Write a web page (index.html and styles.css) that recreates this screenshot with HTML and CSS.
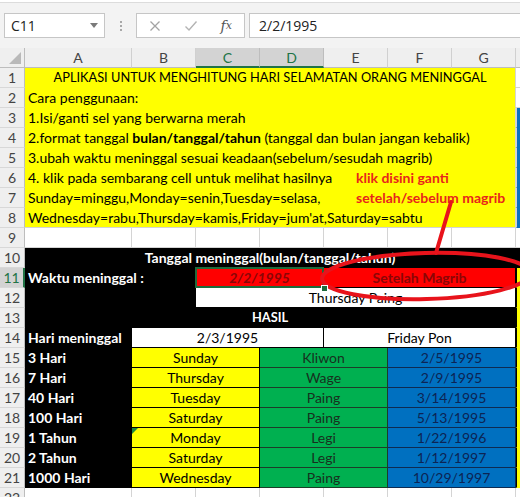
FILE: index.html
```html
<!DOCTYPE html>
<html>
<head>
<meta charset="utf-8">
<title>Hari Selamatan</title>
<link rel="stylesheet" href="styles.css">
</head>
<body>
<div class="app">
  <div class="fbar">
    <div class="namebox"><span class="nb-text">C11</span><span class="caret"></span></div>
    <div class="dots"><i></i><i></i><i></i></div>
    <div class="fbtns">
      <span class="btn"><svg width="12" height="12" viewBox="0 0 12 12"><path d="M1.5 1.5 L10.5 10.5 M10.5 1.5 L1.5 10.5" stroke="#a3a3a3" stroke-width="1.3" fill="none"/></svg></span>
      <span class="btn"><svg width="14" height="12" viewBox="0 0 14 12"><path d="M1.5 6.5 L5 10 L12.5 1.5" stroke="#b3b3b3" stroke-width="1.4" fill="none"/></svg></span>
      <span class="btn fx">f<span class="fxs">x</span></span>
    </div>
    <div class="finput">2/2/1995</div>
  </div>

  <div class="sheet">
    <div class="corner"><span class="corner-tri"></span></div>
    <div class="ch">A</div><div class="ch">B</div><div class="ch sel">C</div><div class="ch sel">D</div><div class="ch">E</div><div class="ch">F</div><div class="ch">G</div><div class="ch"></div>

    <div class="rh">1</div><div class="c y s7 ctr caps">APLIKASI UNTUK MENGHITUNG HARI SELAMATAN ORANG MENINGGAL</div><div class="c hc"></div>
    <div class="rh">2</div><div class="c y s7">Cara penggunaan:</div><div class="c hc"></div>
    <div class="rh">3</div><div class="c y s7">1.Isi/ganti sel yang berwarna merah</div><div class="c hb"></div>
    <div class="rh">4</div><div class="c y s7">2.format tanggal <b>bulan/tanggal/tahun</b> (tanggal dan bulan jangan kebalik)</div><div class="c hb"></div>
    <div class="rh">5</div><div class="c y s7">3.ubah waktu meninggal sesuai keadaan(sebelum/sesudah magrib)</div><div class="c hb"></div>
    <div class="rh">6</div><div class="c y s7 split"><span>4. klik pada sembarang cell untuk melihat hasilnya</span><span class="note">klik disini ganti</span></div><div class="c hb"></div>
    <div class="rh">7</div><div class="c y s7 split"><span>Sunday=minggu,Monday=senin,Tuesday=selasa,</span><span class="note">setelah/sebelum magrib</span></div><div class="c hb"></div>
    <div class="rh">8</div><div class="c y s7 last">Wednesday=rabu,Thursday=kamis,Friday=jum'at,Saturday=sabtu</div><div class="c hb"></div>

    <div class="rh">9</div><div class="c"></div><div class="c"></div><div class="c"></div><div class="c"></div><div class="c"></div><div class="c"></div><div class="c"></div><div class="c hc"></div>

    <div class="rh">10</div><div class="c k s7 ctr">Tanggal meninggal(bulan/tanggal/tahun)</div><div class="c hk"></div>
    <div class="rh sel">11</div><div class="c k s2">Waktu meninggal :</div><div class="c r s2 selcell"><i>2/2/1995</i><span class="handle"></span></div><div class="c r s3">Setelah Magrib</div><div class="c hy"></div>
    <div class="rh">12</div><div class="c k s2"></div><div class="c w s5">Thursday Paing</div><div class="c hy"></div>
    <div class="rh">13</div><div class="c k s7 ctr caps">HASIL</div><div class="c hy"></div>
    <div class="rh">14</div><div class="c k">Hari meninggal</div><div class="c w s3">2/3/1995</div><div class="c w s3">Friday Pon</div><div class="c hy"></div>

    <div class="rh">15</div><div class="c k">3 Hari</div><div class="c yc s2">Sunday</div><div class="c g s2">Kliwon</div><div class="c bl s2">2/5/1995</div><div class="c hy"></div>
    <div class="rh">16</div><div class="c k">7 Hari</div><div class="c yc s2">Thursday</div><div class="c g s2">Wage</div><div class="c bl s2">2/9/1995</div><div class="c hy"></div>
    <div class="rh">17</div><div class="c k">40 Hari</div><div class="c yc s2">Tuesday</div><div class="c g s2">Paing</div><div class="c bl s2">3/14/1995</div><div class="c hy"></div>
    <div class="rh">18</div><div class="c k">100 Hari</div><div class="c yc s2">Saturday</div><div class="c g s2">Paing</div><div class="c bl s2">5/13/1995</div><div class="c hy"></div>
    <div class="rh">19</div><div class="c k">1 Tahun</div><div class="c yc s2 err">Monday</div><div class="c g s2">Legi</div><div class="c bl s2">1/22/1996</div><div class="c hy"></div>
    <div class="rh">20</div><div class="c k">2 Tahun</div><div class="c yc s2">Saturday</div><div class="c g s2">Legi</div><div class="c bl s2">1/12/1997</div><div class="c hy"></div>
    <div class="rh">21</div><div class="c k">1000 Hari</div><div class="c yc s2">Wednesday</div><div class="c g s2">Paing</div><div class="c bl s2">10/29/1997</div><div class="c hy"></div>

    <div class="rh">22</div><div class="c"></div><div class="c"></div><div class="c"></div><div class="c"></div><div class="c"></div><div class="c"></div><div class="c"></div><div class="c hc"></div>
  </div>

  <svg class="overlay" width="520" height="497" viewBox="0 0 520 497">
    <ellipse cx="426" cy="276" rx="104" ry="23" fill="none" stroke="#e8131b" stroke-width="4" transform="rotate(-1.5 426 276)"/>
    <path d="M451 202 L436 253" stroke="#e8131b" stroke-width="4" stroke-linecap="round" fill="none"/>
  </svg>
</div>
</body>
</html>
```
FILE: styles.css
```css
* { box-sizing: border-box; margin: 0; padding: 0; }
html, body { width: 520px; height: 497px; overflow: hidden; background: #fff; }
body { font-family: Lato, "Open Sans", sans-serif; font-size: 14px; color: #000; }

.app { position: relative; width: 520px; height: 497px; overflow: hidden; }

/* formula bar */
.fbar {
  margin-top: 2px;
  height: 46px;
  border-top: 1px solid #dcdcdc;
  background: #f3f3f3;
  display: flex;
  align-items: flex-start;
  padding: 10px 0 0 4px;
}
.namebox {
  width: 101px; height: 25px;
  background: #fff; border: 1px solid #c6c6c6;
  display: flex; align-items: center;
  padding: 0 6px 0 6px;
  font-family: "Open Sans", sans-serif; font-size: 14px; color: #222;
}
.caret {
  margin-left: auto;
  width: 0; height: 0;
  border-left: 4px solid transparent; border-right: 4px solid transparent;
  border-top: 5px solid #7a7a7a;
}
.dots {
  width: 31px; height: 25px;
  display: flex; flex-direction: column; align-items: center; justify-content: center; gap: 2px;
}
.dots i { display: block; width: 2px; height: 2px; background: #a8a8a8; }
.fbtns {
  width: 109px; height: 25px;
  background: #fff; border: 1px solid #c6c6c6;
  display: flex; align-items: center;
}
.btn { width: 36px; display: flex; justify-content: center; align-items: center; }
.fx { font-family: "DejaVu Serif", "Liberation Serif", serif; font-style: italic; font-size: 14px; color: #555; }
.fxs { font-size: 11px; }
.finput {
  flex: 1; height: 25px; margin-left: 4px;
  background: #fff; border: 1px solid #c6c6c6; border-right: none;
  padding-left: 9px;
  font-family: "Open Sans", sans-serif; font-size: 14px; color: #222;
  line-height: 23px;
}

/* sheet grid */
.sheet {
  display: grid;
  grid-template-columns: 25px 107px repeat(6, 64px) 1fr;
  grid-auto-rows: 20px;
}
.corner {
  background: #efefef;
  border-right: 1px solid #bdbdbd; border-bottom: 1px solid #bdbdbd;
  display: flex; align-items: flex-end; justify-content: flex-end;
  padding: 0 3px 3px 0;
}
.corner-tri {
  width: 0; height: 0;
  border-left: 12px solid transparent;
  border-bottom: 12px solid #b9b9b9;
}
.ch {
  background: #efefef;
  border-right: 1px solid #d0d0d0; border-bottom: 1px solid #bdbdbd;
  text-align: center; line-height: 19px;
  font-size: 14px; color: #444;
}
.ch.sel { background: #d3d3d3; color: #217346; border-bottom: 2px solid #217346; border-right-color: #bdbdbd; }
.rh {
  background: #efefef;
  border-right: 1px solid #bdbdbd; border-bottom: 1px solid #d8d8d8;
  text-align: center; line-height: 19px;
  font-size: 14px; color: #444;
}
.rh.sel { background: #d3d3d3; color: #217346; border-right: 2px solid #217346; }

.c {
  position: relative;
  border-right: 1px solid #d4d4d4; border-bottom: 1px solid #d4d4d4;
  padding: 0 3px;
  white-space: nowrap;
  line-height: 19px;
}
.s2 { grid-column: span 2; }
.s3 { grid-column: span 3; }
.s5 { grid-column: span 5; }
.s7 { grid-column: span 7; }
.ctr { text-align: center; }
.caps { font-size: 12.8px; }

.y { background: #ffff00; border-bottom-color: #ffff00; }
.y.last { border-bottom-color: #d4d4d4; }
.split { display: grid; grid-template-columns: 328px 1fr; }
.note { color: #e8251b; font-weight: bold; }

.k { background: #000; color: #fff; font-weight: bold; border-color: #000; }
.r { background: #ff0000; color: #8a0606; font-weight: bold; text-align: center; border-right-color: #000; border-bottom-color: #000; }
.r i { font-style: italic; }
.w { background: #fff; text-align: center; border-right-color: #000; border-bottom-color: #000; }

.yc { background: #ffff00; text-align: center; border-right-color: #000; border-bottom-color: #000; }
.g { background: #00b050; color: #17301e; text-align: center; border-right-color: #1c3d28; border-bottom-color: #1c3d28; }
.bl { background: #0070c0; color: #0c2454; text-align: center; border-right-color: #0e2b52; border-bottom-color: #0e2b52; }

.hc { border-right: none; }
.hb { background: #0a6fc2; border-right: none; border-bottom-color: #0a6fc2; border-left: 1px solid #d4d4d4; }
.hy { background: #ffff00; border-right: none; border-bottom-color: #ffff00; border-left: 1px solid #000; }
.hk { background: #000; border-color: #000; }

.selcell::before {
  content: "";
  position: absolute;
  left: -1px; top: -1px; right: -1px; bottom: -1px;
  border: 2px solid #1e6b3c;
}
.handle {
  position: absolute;
  right: -5px; bottom: -5px;
  width: 7px; height: 7px;
  background: #1e6b3c;
  border: 1px solid #fff;
  z-index: 2;
}
.err::before {
  content: "";
  position: absolute;
  left: 0; top: 0;
  border-top: 6px solid #1f8a3c;
  border-right: 6px solid transparent;
}

.overlay { position: absolute; left: 0; top: 0; pointer-events: none; }
```
